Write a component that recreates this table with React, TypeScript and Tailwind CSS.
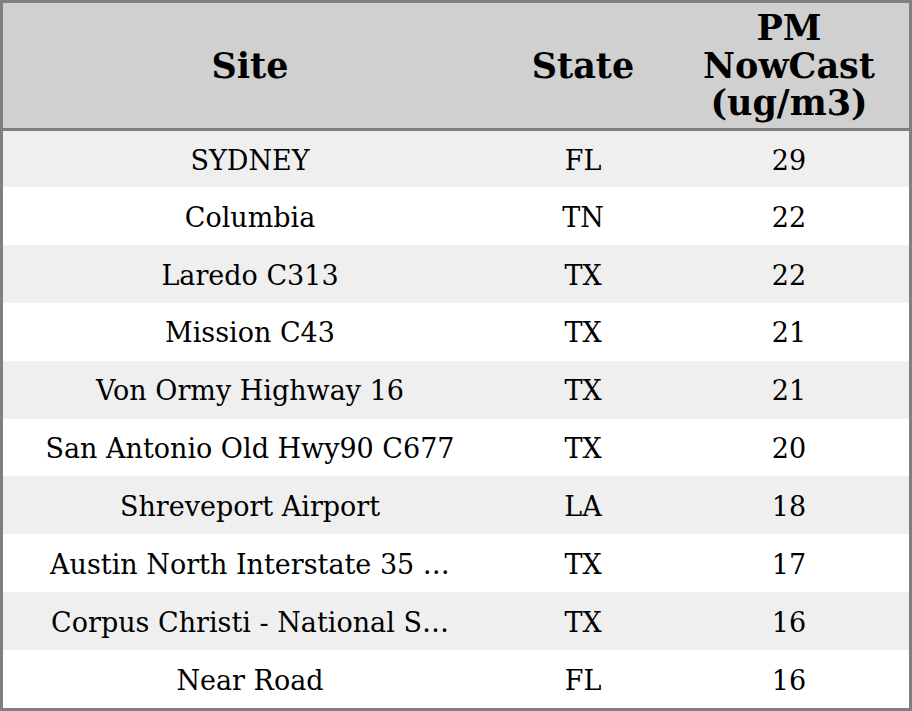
import React from "react";

const rows: [string, string, string][] = [
  ["SYDNEY", "FL", "29"],
  ["Columbia", "TN", "22"],
  ["Laredo C313", "TX", "22"],
  ["Mission C43", "TX", "21"],
  ["Von Ormy Highway 16", "TX", "21"],
  ["San Antonio Old Hwy90 C677", "TX", "20"],
  ["Shreveport Airport", "LA", "18"],
  ["Austin North Interstate 35 …", "TX", "17"],
  ["Corpus Christi - National S…", "TX", "16"],
  ["Near Road", "FL", "16"],
];

export default function App() {
  return (
    <div
      className="w-[912px] h-[711px] border-[3px] border-[#808080] bg-white text-black flex flex-col"
      style={{ fontFamily: '"DejaVu Serif", serif' }}
    >
      <div className="grid grid-cols-[494px_172px_240px] h-[125px] bg-[#d0d0d0] border-b-[3px] border-[#808080] box-content font-bold text-[35px] leading-[37.5px]">
        <div className="flex items-center justify-center text-center">Site</div>
        <div className="flex items-center justify-center text-center">State</div>
        <div className="flex items-center justify-center text-center">
          PM
          <br />
          NowCast
          <br />
          (ug/m3)
        </div>
      </div>
      <div className="flex flex-col flex-1 text-[27px]">
        {rows.map((r, i) => (
          <div
            key={i}
            className={`grid grid-cols-[494px_172px_240px] items-center pt-[4px] ${i === 0 ? "h-[56px]" : "flex-1"} ${i % 2 === 0 ? "bg-[#efefef]" : "bg-white"}`}
          >
            <div className="text-center whitespace-nowrap">{r[0]}</div>
            <div className="text-center">{r[1]}</div>
            <div className="text-center">{r[2]}</div>
          </div>
        ))}
      </div>
    </div>
  );
}
